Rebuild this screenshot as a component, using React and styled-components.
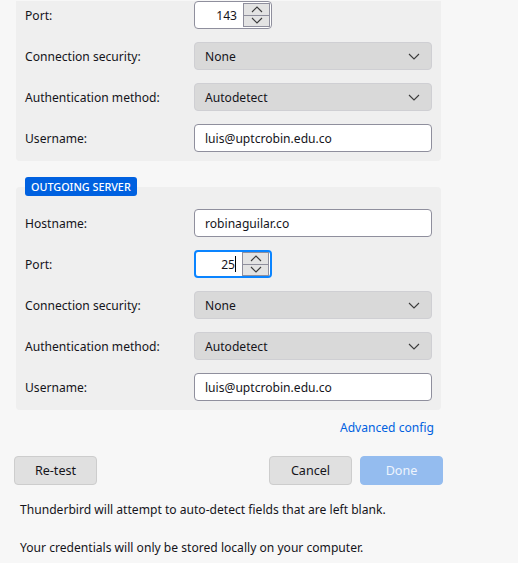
import React from 'react'
import styled, { createGlobalStyle } from 'styled-components'

const GlobalStyle = createGlobalStyle`
    html, body {
        margin: 0;
        padding: 0;
        background: #f7f7f7;
    }
    body {
        font-family: "Noto Sans", "Open Sans", sans-serif;
        font-size: 12.1px;
        color: #15141a;
    }
`

const incoming = [
    { label: 'Port:', kind: 'spin', value: '143' },
    { label: 'Connection security:', kind: 'select', value: 'None' },
    { label: 'Authentication method:', kind: 'select', value: 'Autodetect' },
    { label: 'Username:', kind: 'text', value: 'luis@uptcrobin.edu.co' },
]

const outgoing = [
    { label: 'Hostname:', kind: 'text', value: 'robinaguilar.co' },
    { label: 'Port:', kind: 'spin', value: '25', focused: true },
    { label: 'Connection security:', kind: 'select', value: 'None' },
    { label: 'Authentication method:', kind: 'select', value: 'Autodetect' },
    { label: 'Username:', kind: 'text', value: 'luis@uptcrobin.edu.co' },
]

function Chevron({ up }) {
    return (
        <svg width="12" height="7" viewBox="0 0 12 7">
            <path d={up ? 'M1 6 L6 1 L11 6' : 'M1 1 L6 6 L11 1'} fill="none" stroke="#3b3b3b" strokeWidth="1.1" />
        </svg>
    )
}

function Field({ row }) {
    if (row.kind === 'spin') {
        return (
            <Spin $focused={row.focused}>
                <SpinValue>{row.value}{row.focused && <Caret />}</SpinValue>
                <SpinButtons>
                    <SpinButton><Chevron up /></SpinButton>
                    <SpinButton><Chevron /></SpinButton>
                </SpinButtons>
            </Spin>
        )
    }
    if (row.kind === 'select') {
        return (
            <Select>
                <span>{row.value}</span>
                <Chevron />
            </Select>
        )
    }
    return <TextBox>{row.value}</TextBox>
}

function ServerPanel({ rows, clipped }) {
    return (
        <Panel $clipped={clipped}>
            {rows.map((row, i) => (
                <Row key={i}>
                    <Label>{row.label}</Label>
                    <Field row={row} />
                </Row>
            ))}
        </Panel>
    )
}

function App() {
    return (
        <Page>
            <GlobalStyle />
            <ServerPanel rows={incoming} clipped />
            <Section>
                <Badge>OUTGOING SERVER</Badge>
                <ServerPanel rows={outgoing} />
            </Section>
            <AdvancedRow>
                <Link>Advanced config</Link>
            </AdvancedRow>
            <ButtonBar>
                <Button>Re-test</Button>
                <Spacer />
                <Button>Cancel</Button>
                <Button $primary disabled>Done</Button>
            </ButtonBar>
            <Note>Thunderbird will attempt to auto-detect fields that are left blank.</Note>
            <Note>Your credentials will only be stored locally on your computer.</Note>
        </Page>
    )
}

const Page = styled.div`
    width: 518px;
    height: 563px;
    overflow: hidden;
    box-sizing: border-box;
    padding: 1px 0 0 16px;
`

const Panel = styled.div`
    width: 425px;
    box-sizing: border-box;
    background: #efefef;
    border-radius: ${p => (p.$clipped ? '0 0 4px 4px' : '4px')};
    padding: ${p => (p.$clipped ? '0 9px 9px' : '22px 9px 9px')};
    display: flex;
    flex-direction: column;
    gap: 13px;
`

const Section = styled.div`
    margin-top: 16px;
    display: flex;
    flex-direction: column;
`

const Badge = styled.div`
    align-self: flex-start;
    margin-left: 9px;
    margin-bottom: -9px;
    position: relative;
    z-index: 1;
    height: 19px;
    line-height: 19px;
    padding: 0 6px;
    border-radius: 3px;
    background: #0061e0;
    color: #fff;
    font-size: 10.8px;
    font-weight: 500;
`

const Row = styled.div`
    display: grid;
    grid-template-columns: 169px 1fr;
    align-items: center;
    height: 28px;
`

const Label = styled.div`
    color: #15141a;
`

const boxBase = `
    height: 28px;
    box-sizing: border-box;
    border-radius: 4px;
    display: flex;
    align-items: center;
`

const TextBox = styled.div`
    ${boxBase}
    background: #fff;
    border: 1px solid #8f8f9d;
    padding: 0 10px;
`

const Select = styled.div`
    ${boxBase}
    background: #d9d9d9;
    border: 1px solid #cfcfd3;
    justify-content: space-between;
    padding: 0 10px;
    svg {
        margin-right: 1px;
    }
`

const Spin = styled.div`
    ${boxBase}
    width: 78px;
    background: #fff;
    border: ${p => (p.$focused ? '2px solid #0a84ff' : '1px solid #8f8f9d')};
    padding: ${p => (p.$focused ? '0 1px 0 0' : '0 1px 0 1px')};
`

const SpinValue = styled.div`
    flex: 1;
    text-align: right;
    padding-right: 6px;
    display: flex;
    justify-content: flex-end;
    align-items: center;
`

const Caret = styled.span`
    display: inline-block;
    width: 1px;
    height: 16px;
    background: #000;
`

const SpinButtons = styled.div`
    display: flex;
    flex-direction: column;
    width: 27px;
    height: 24px;
    border: 1px solid #8f8f9d;
    box-sizing: border-box;
    background: #8f8f9d;
    gap: 1px;
`

const SpinButton = styled.div`
    flex: 1;
    background: #e3e3e3;
    display: flex;
    align-items: center;
    justify-content: center;
`

const AdvancedRow = styled.div`
    width: 418px;
    display: flex;
    justify-content: flex-end;
    margin-top: 9px;
`

const Link = styled.span`
    color: #0061e0;
    cursor: pointer;
`

const ButtonBar = styled.div`
    display: flex;
    gap: 8px;
    margin: 20px 0 0 -2px;
    width: 429px;
`

const Spacer = styled.div`
    flex: 1;
`

const Button = styled.button`
    width: 83px;
    height: 29px;
    border-radius: 4px;
    font-family: inherit;
    font-size: 12.6px;
    border: 1px solid ${p => (p.$primary ? '#94bcef' : '#cdcdcd')};
    background: ${p => (p.$primary ? '#94bcef' : '#e0e0e0')};
    color: ${p => (p.$primary ? '#eef4fd' : '#15141a')};
`

const Note = styled.p`
    margin: 16px 0 0 4px;
    & + & {
        margin-top: 21px;
    }
`

export default App
